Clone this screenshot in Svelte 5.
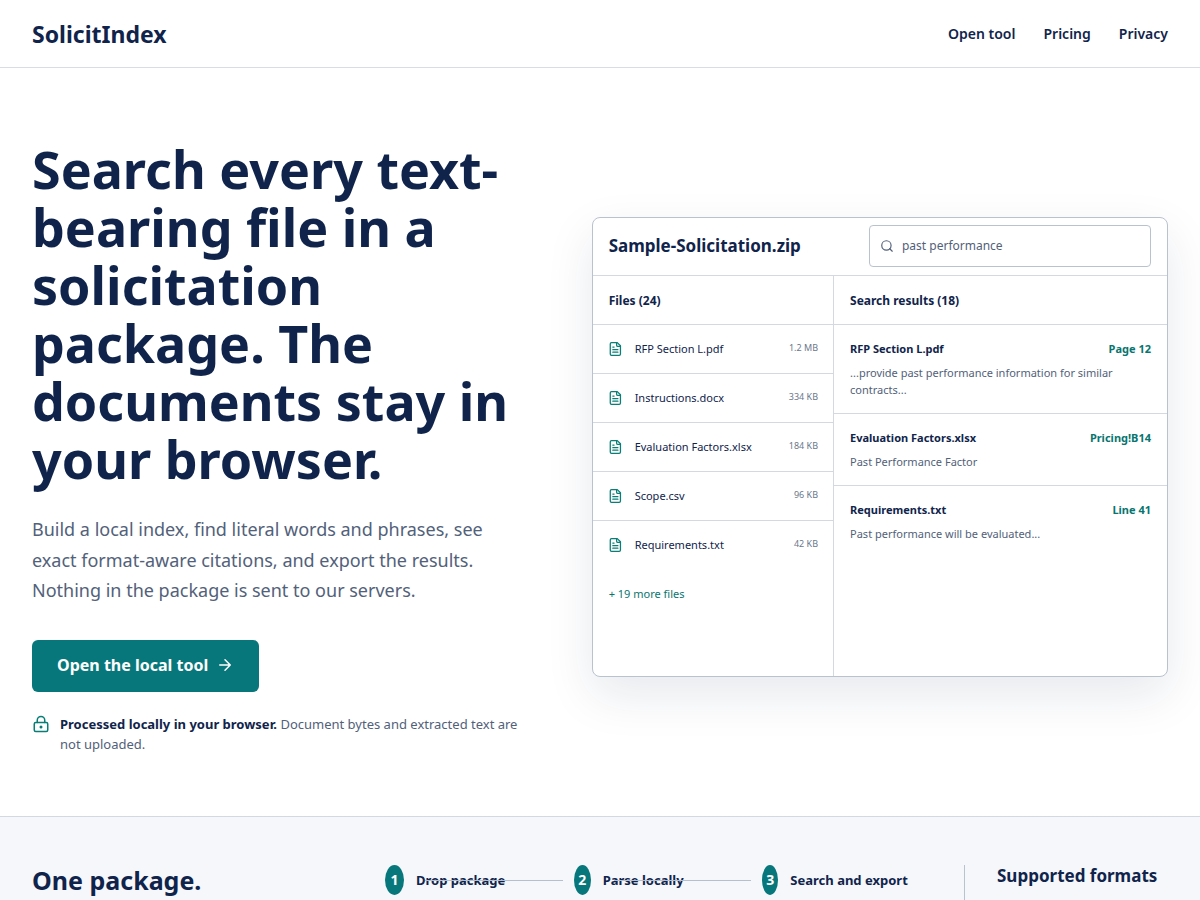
<script lang="ts">
	// Landing page: header, hero with a static product preview, and the start of the workflow section.

	const nav = [
		{ label: 'Open tool', href: '#tool' },
		{ label: 'Pricing', href: '#pricing' },
		{ label: 'Privacy', href: '#privacy' }
	];

	const files = [
		{ name: 'RFP Section L.pdf', size: '1.2 MB' },
		{ name: 'Instructions.docx', size: '334 KB' },
		{ name: 'Evaluation Factors.xlsx', size: '184 KB' },
		{ name: 'Scope.csv', size: '96 KB' },
		{ name: 'Requirements.txt', size: '42 KB' }
	];

	const results = [
		{
			file: 'RFP Section L.pdf',
			cite: 'Page 12',
			text: '...provide past performance information for similar contracts...'
		},
		{ file: 'Evaluation Factors.xlsx', cite: 'Pricing!B14', text: 'Past Performance Factor' },
		{ file: 'Requirements.txt', cite: 'Line 41', text: 'Past performance will be evaluated...' }
	];

	const steps = ['Drop package', 'Parse locally', 'Search and export'];

	let query = $state('past performance');
</script>

<header class="site-header">
	<a class="brand" href="#top">SolicitIndex</a>
	<nav aria-label="Main">
		{#each nav as item}
			<a href={item.href}>{item.label}</a>
		{/each}
	</nav>
</header>

<main>
	<section class="hero">
		<div class="intro">
			<h1>Search every text-bearing file in a solicitation package. The documents stay in your browser.</h1>
			<p class="lead">
				Build a local index, find literal words and phrases, see exact format-aware citations, and
				export the results. Nothing in the package is sent to our servers.
			</p>
			<a class="cta" href="#tool">
				Open the local tool
				<svg width="18" height="18" viewBox="0 0 24 24" aria-hidden="true">
					<path d="M5 12h14M12 5l7 7-7 7" />
				</svg>
			</a>
			<p class="note">
				<svg width="18" height="18" viewBox="0 0 24 24" aria-hidden="true">
					<circle cx="12" cy="16" r="1" />
					<rect x="3" y="10" width="18" height="12" rx="2" />
					<path d="M7 10V7a5 5 0 0 1 10 0v3" />
				</svg>
				<span>
					<strong>Processed locally in your browser.</strong> Document bytes and extracted text are not
					uploaded.
				</span>
			</p>
		</div>

		<div class="preview">
			<div class="preview-head">
				<h2>Sample-Solicitation.zip</h2>
				<label class="search">
					<svg width="14" height="14" viewBox="0 0 24 24" aria-hidden="true">
						<circle cx="11" cy="11" r="8" />
						<path d="m21 21-4.3-4.3" />
					</svg>
					<input type="text" aria-label="Search package" bind:value={query} />
				</label>
			</div>
			<div class="preview-body">
				<div class="files">
					<h3>Files (24)</h3>
					<ul>
						{#each files as file}
							<li>
								<svg width="14" height="16" viewBox="2 -0.5 22 25" aria-hidden="true">
									<path d="M15 2H6a2 2 0 0 0-2 2v16a2 2 0 0 0 2 2h12a2 2 0 0 0 2-2V7Z" />
									<path d="M14 2v4a2 2 0 0 0 2 2h4M10 9H8M16 13H8M16 17H8" />
								</svg>
								<span>{file.name}</span>
								<small>{file.size}</small>
							</li>
						{/each}
					</ul>
					<a class="more" href="#files">+ 19 more files</a>
				</div>
				<div class="results">
					<h3>Search results (18)</h3>
					{#each results as result}
						<article>
							<div class="result-head">
								<strong>{result.file}</strong>
								<span>{result.cite}</span>
							</div>
							<p>{result.text}</p>
						</article>
					{/each}
				</div>
			</div>
		</div>
	</section>

	<section class="workflow">
		<h2>One package.</h2>
		<ol>
			{#each steps as step, i}
				<li>
					<span class="badge">{i + 1}</span>
					<strong>{step}</strong>
				</li>
			{/each}
		</ol>
		<aside>
			<h3>Supported formats</h3>
		</aside>
	</section>
</main>

<style>
	:global(body) {
		margin: 0;
		background: #fff;
		color: #10244b;
		font-family: 'Noto Sans', sans-serif;
	}
	h1,
	h2,
	h3,
	p,
	ul,
	ol {
		margin: 0;
		padding: 0;
	}
	ul,
	ol {
		list-style: none;
	}
	a {
		color: inherit;
		text-decoration: none;
	}
	svg {
		flex: none;
		fill: none;
		stroke: currentColor;
		stroke-width: 2;
		stroke-linecap: round;
		stroke-linejoin: round;
	}

	.site-header {
		display: flex;
		align-items: center;
		justify-content: space-between;
		padding: 0 32px;
		height: 67px;
		border-bottom: 1px solid #d9dde3;
	}
	.brand {
		font-size: 23px;
		font-weight: 700;
	}
	nav {
		display: flex;
		gap: 28px;
		font-size: 14px;
		font-weight: 600;
	}

	.hero {
		display: grid;
		grid-template-columns: 0.86fr 1fr;
		gap: 64px;
		align-items: center;
		padding: 72px 32px 62px;
	}
	h1 {
		font-size: 52px;
		line-height: 58px;
		font-weight: 700;
	}
	.lead {
		margin-top: 26px;
		font-size: 18px;
		line-height: 1.7;
		color: #52617a;
	}
	.cta {
		display: inline-flex;
		align-items: center;
		gap: 8px;
		height: 51px;
		margin-top: 34px;
		padding: 0 25px 1px;
		border-radius: 6px;
		background: #07777b;
		color: #fff;
		font-size: 16px;
		font-weight: 700;
	}
	.note {
		display: flex;
		gap: 10px;
		margin-top: 22px;
		font-size: 13px;
		line-height: 20px;
		color: #52617a;
	}
	.note svg {
		margin-top: 1px;
		color: #087e76;
	}
	.note strong {
		color: #10244b;
	}

	.preview {
		display: flex;
		flex-direction: column;
		min-height: 458px;
		border: 1px solid #b9c2cf;
		border-radius: 8px;
		background: #fff;
		box-shadow: 0 18px 48px rgba(16, 36, 75, 0.1);
	}
	.preview-head {
		display: flex;
		align-items: center;
		justify-content: space-between;
		padding: 7px 16px 8px;
		border-bottom: 1px solid #d3d9e2;
	}
	.preview-head h2 {
		font-size: 17px;
		line-height: 24px;
	}
	.search {
		display: flex;
		align-items: center;
		gap: 8px;
		box-sizing: border-box;
		width: 52%;
		height: 42px;
		padding: 0 10px;
		border: 1px solid #b9c2cf;
		border-radius: 4px;
		color: #52617a;
	}
	.search input {
		flex: 1;
		min-width: 0;
		padding: 0;
		border: 0;
		outline: 0;
		background: none;
		color: inherit;
		font: inherit;
		font-size: 12px;
	}
	.preview-body {
		flex: 1;
		display: grid;
		grid-template-columns: 0.725fr 1fr;
	}
	.files {
		border-right: 1px solid #d3d9e2;
	}
	.preview-body h3 {
		padding: 2px 16px 0;
		font-size: 12px;
		line-height: 46px;
	}
	.files li {
		display: flex;
		align-items: center;
		gap: 12px;
		height: 48px;
		padding: 0 15px 0 16px;
		border-top: 1px solid #d3d9e2;
		font-size: 11px;
	}
	.files li svg {
		color: #087e76;
	}
	.files small {
		margin-left: auto;
		padding-bottom: 2px;
		font-size: 9px;
		color: #6b778b;
	}
	.more {
		display: block;
		padding: 0 16px;
		font-size: 11px;
		line-height: 49px;
		color: #08756f;
	}
	.results article {
		padding: 16px 16px 15px;
		border-top: 1px solid #d3d9e2;
		font-size: 11px;
	}
	.result-head {
		display: flex;
		justify-content: space-between;
		margin-bottom: 7px;
		line-height: 16px;
	}
	.result-head span {
		color: #08756f;
		font-weight: 700;
	}
	.results p {
		line-height: 17px;
		color: #52617a;
	}

	.workflow {
		display: grid;
		grid-template-columns: 321fr 547fr 204fr;
		gap: 32px;
		padding: 48px 32px 0;
		border-top: 1px solid #d3d9e2;
		background: #f5f7fb;
	}
	.workflow h2 {
		font-size: 25px;
		line-height: 30px;
	}
	ol {
		display: grid;
		grid-template-columns: repeat(3, 1fr);
		gap: 19px;
	}
	ol li {
		position: relative;
		display: flex;
		align-items: center;
		gap: 12px;
		height: 30px;
		font-size: 13px;
		white-space: nowrap;
	}
	/* connector running from one step to the next */
	ol li:not(:last-child)::after {
		content: '';
		position: absolute;
		top: 15px;
		left: 40px;
		right: -8px;
		height: 1px;
		background: #b4bfd0;
	}
	.badge {
		display: grid;
		place-items: center;
		width: 19px;
		height: 30px;
		border-radius: 50%;
		background: #07777b;
		color: #fff;
		font-size: 14px;
		font-weight: 700;
	}
	li:nth-child(2) .badge {
		width: 17px;
	}
	li:nth-child(3) .badge {
		width: 16px;
	}
	aside {
		min-height: 36px;
		padding-left: 32px;
		border-left: 1px solid #b9c2cf;
	}
	aside h3 {
		font-size: 17px;
		line-height: 21px;
		white-space: nowrap;
	}
</style>
